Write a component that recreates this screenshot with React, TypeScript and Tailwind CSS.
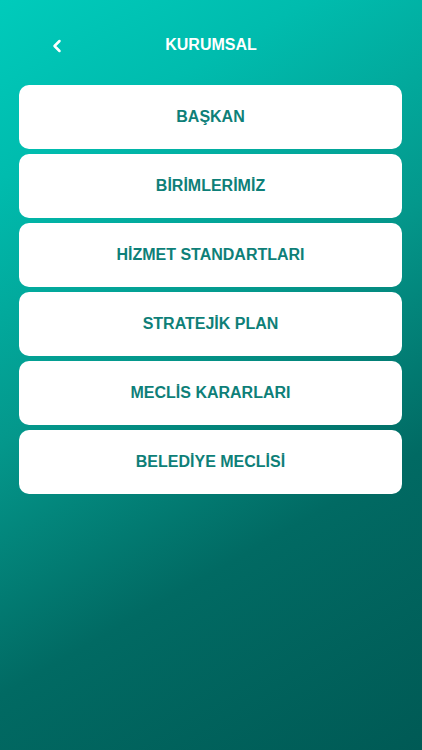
import { ChevronLeft } from 'lucide-react'

const ITEMS = [
  'BAŞKAN',
  'BİRİMLERİMİZ',
  'HİZMET STANDARTLARI',
  'STRATEJİK PLAN',
  'MECLİS KARARLARI',
  'BELEDİYE MECLİSİ',
]

export default function App() {
  return (
    <div
      className="h-[750px] w-[422px] overflow-hidden bg-[linear-gradient(150deg,#00cbbb_0%,#00bcae_18%,#04978b_45%,#016a63_70%,#005a55_100%)]"
      style={{ fontFamily: '"Liberation Sans", Arial, sans-serif' }}
    >
      {/* Header */}
      <div className="relative flex h-[85px] items-center justify-center pt-[5px]">
        <button className="absolute left-[47px] top-[36px] text-white" aria-label="Geri">
          <ChevronLeft className="h-[20px] w-[20px]" strokeWidth={3} />
        </button>
        <h1 className="text-[16px] font-bold text-white">KURUMSAL</h1>
      </div>

      {/* Menu */}
      <div className="flex flex-col gap-[5px] pl-[19px] pr-[20px]">
        {ITEMS.map((item) => (
          <button
            key={item}
            className="flex h-[64px] w-full items-center justify-center rounded-[10px] bg-white text-[16px] font-bold text-[#0e7f78]"
          >
            {item}
          </button>
        ))}
      </div>
    </div>
  )
}
